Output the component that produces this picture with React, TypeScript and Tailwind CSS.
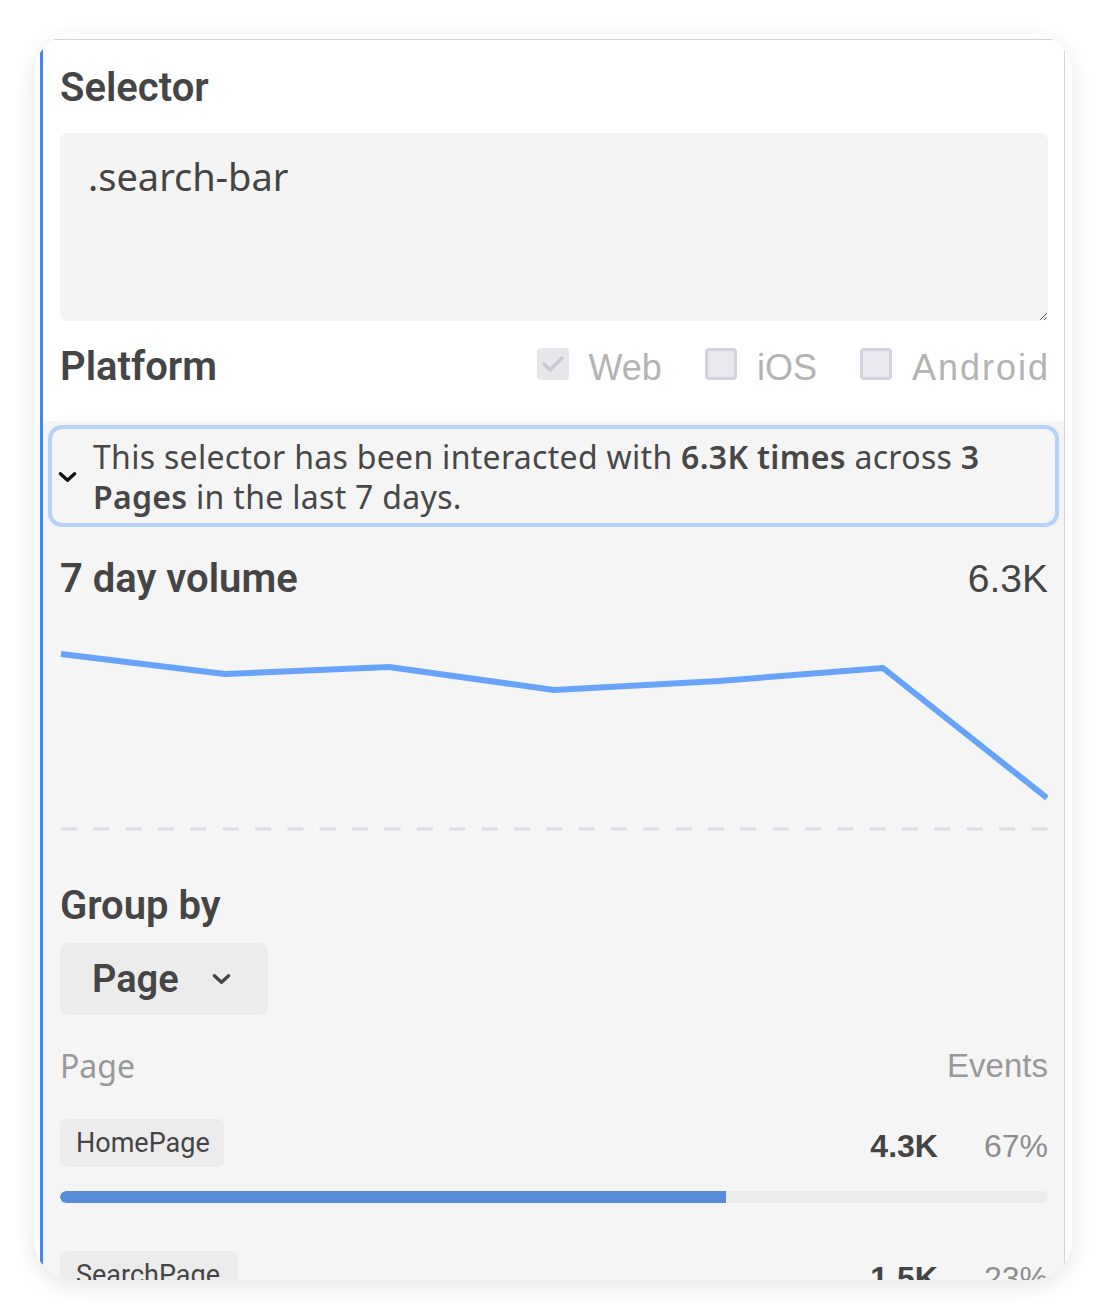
import React from "react";

function Chevron({ className, color, sw }: { className: string; color: string; sw: number }) {
  return (
    <svg viewBox="0 0 20 12" className={className} fill="none">
      <polyline points="2.5,2.5 10,9.5 17.5,2.5" stroke={color} strokeWidth={sw} strokeLinecap="round" strokeLinejoin="round" />
    </svg>
  );
}

function CheckBox({ checked }: { checked?: boolean }) {
  if (checked) {
    return (
      <div className="w-[32px] h-[32px] rounded-[4px] bg-[#e6e6eb] flex items-center justify-center shrink-0">
        <svg viewBox="0 0 32 32" className="w-[32px] h-[32px]" fill="none">
          <polyline points="7,16 13,22 25,10" stroke="#c9c9d3" strokeWidth="3.5" strokeLinecap="round" strokeLinejoin="round" />
        </svg>
      </div>
    );
  }
  return <div className="w-[32px] h-[32px] rounded-[4px] bg-[#e8e8ee] border-[3px] border-[#d2d2dc] shrink-0" />;
}

function Row({ name, value, pct, fill, chipW }: { name: string; value: string; pct: string; fill: number; chipW: string }) {
  return (
    <div>
      <div className="flex items-center justify-between h-[48px]">
        <div className={`h-[48px] ${chipW} rounded-[6px] bg-[#ececec] flex items-center pl-[16px] text-[27px] text-[#454545] font-['Roboto',sans-serif]`}>
          {name}
        </div>
        <div className="flex items-baseline gap-[46px] pt-[6px] font-['Liberation_Sans',Arial,sans-serif] text-[32px] leading-[40px]">
          <span className="font-bold text-[#444]">{value}</span>
          <span className="text-[#8e8e8e]">{pct}</span>
        </div>
      </div>
      <div className="mt-[24px] h-[12px] rounded-full bg-[#ececec] overflow-hidden">
        <div className="h-full bg-[#578cdb] rounded-l-full" style={{ width: `${fill}%` }} />
      </div>
    </div>
  );
}

export default function App() {
  return (
    <div className="min-h-screen bg-white pt-[34px] pl-[34px]">
      <div className="w-[1038px] h-[1246px] rounded-[40px] bg-white shadow-[0_6px_22px_rgba(0,0,0,0.10)] overflow-hidden pt-[5px] pl-[6px] pr-[7px]">
        <div className="h-full border-l-[3px] border-t border-r border-l-[#4285f4] border-t-[#d3d3dd] border-r-[#d3d3dd] rounded-tl-[12px] rounded-tr-[12px] overflow-hidden flex flex-col">
          {/* white top section */}
          <div className="bg-white pl-[17px] pr-[16px] pt-[24px] pb-[30px]">
            <div className="text-[40px] leading-[48px] font-semibold text-[#454545] font-['Roboto',sans-serif]">Selector</div>
            <textarea
              readOnly
              defaultValue=".search-bar"
              className="mt-[21px] block w-full h-[188px] rounded-[8px] bg-[#f4f4f4] pl-[28px] pt-[15px] text-[38px] text-[#444] font-['Noto_Sans',sans-serif] outline-none resize-y"
            />
            <div className="mt-[22px] h-[48px] flex items-center justify-between">
              <div className="text-[40px] leading-[48px] font-semibold text-[#454545] font-['Roboto',sans-serif]">Platform</div>
              <div className="flex items-center text-[36px] leading-[40px] text-[#b3b3b3] font-['Liberation_Sans',Arial,sans-serif] -mt-[6px]">
                <CheckBox checked />
                <span className="ml-[20px] pt-[8px]">Web</span>
                <div className="ml-[43px]"><CheckBox /></div>
                <span className="ml-[20px] pt-[8px]">iOS</span>
                <div className="ml-[43px]"><CheckBox /></div>
                <span className="ml-[20px] pt-[8px] tracking-[2px] -mr-[2px]">Android</span>
              </div>
            </div>
          </div>

          {/* gray section */}
          <div className="flex-1 bg-[#f5f5f5] pt-[4px] px-[5px] rounded-tl-[6px]">
            <div className="border-4 border-[#b5d3fa] rounded-[14px] pt-[8px] pb-[6px] pl-[6px] pr-[14px] flex items-center">
              <Chevron className="w-[19px] h-[12px] shrink-0" color="#111" sw={3.5} />
              <p className="ml-[16px] text-[32px] leading-[40px] tracking-[0.3px] text-[#474747] font-['Noto_Sans',sans-serif]">
                This selector has been interacted with <b className="font-semibold">6.3K times</b> across <b className="font-semibold">3 Pages</b> in the last 7 days.
              </p>
            </div>

            <div className="pl-[12px] pr-[11px]">
              <div className="mt-[28px] flex items-center justify-between h-[48px]">
                <div className="text-[40px] leading-[48px] font-semibold text-[#454545] font-['Roboto',sans-serif]">7 day volume</div>
                <div className="text-[39px] text-[#454545] font-['Liberation_Sans',Arial,sans-serif]">6.3K</div>
              </div>

              <svg width="988" height="220" viewBox="0 0 988 220" className="block mt-[17px]">
                <polyline
                  points="1,34 165,54 329,47 494,70 659,61 823,48 987,178"
                  fill="none"
                  stroke="#68a3fa"
                  strokeWidth="6"
                  strokeLinejoin="round"
                />
                <line x1="1" y1="209" x2="988" y2="209" stroke="#dcdce3" strokeWidth="3" strokeDasharray="16 16.35" />
              </svg>

              <div className="mt-[42px] text-[40px] leading-[48px] font-semibold text-[#454545] font-['Roboto',sans-serif]">Group by</div>

              <div className="mt-[13px] w-[208px] h-[72px] rounded-[8px] bg-[#ececec] flex items-center pl-[32px]">
                <span className="text-[38px] font-semibold text-[#454545] font-['Roboto',sans-serif]">Page</span>
                <Chevron className="ml-[33px] w-[19px] h-[12px]" color="#454545" sw={3.5} />
              </div>

              <div className="mt-[31px] flex items-center justify-between h-[40px]">
                <span className="text-[32px] text-[#999] font-['Noto_Sans',sans-serif]">Page</span>
                <span className="text-[33px] text-[#999] font-['Liberation_Sans',Arial,sans-serif]">Events</span>
              </div>

              <div className="mt-[33px] flex flex-col gap-[48px]">
                <Row name="HomePage" value="4.3K" pct="67%" fill={67.4} chipW="w-[164px]" />
                <Row name="SearchPage" value="1.5K" pct="23%" fill={23.3} chipW="w-[178px]" />
                <Row name="ResultsPage" value="0.5K" pct="10%" fill={9.3} chipW="w-[186px]" />
              </div>
            </div>
          </div>
        </div>
      </div>
    </div>
  );
}
